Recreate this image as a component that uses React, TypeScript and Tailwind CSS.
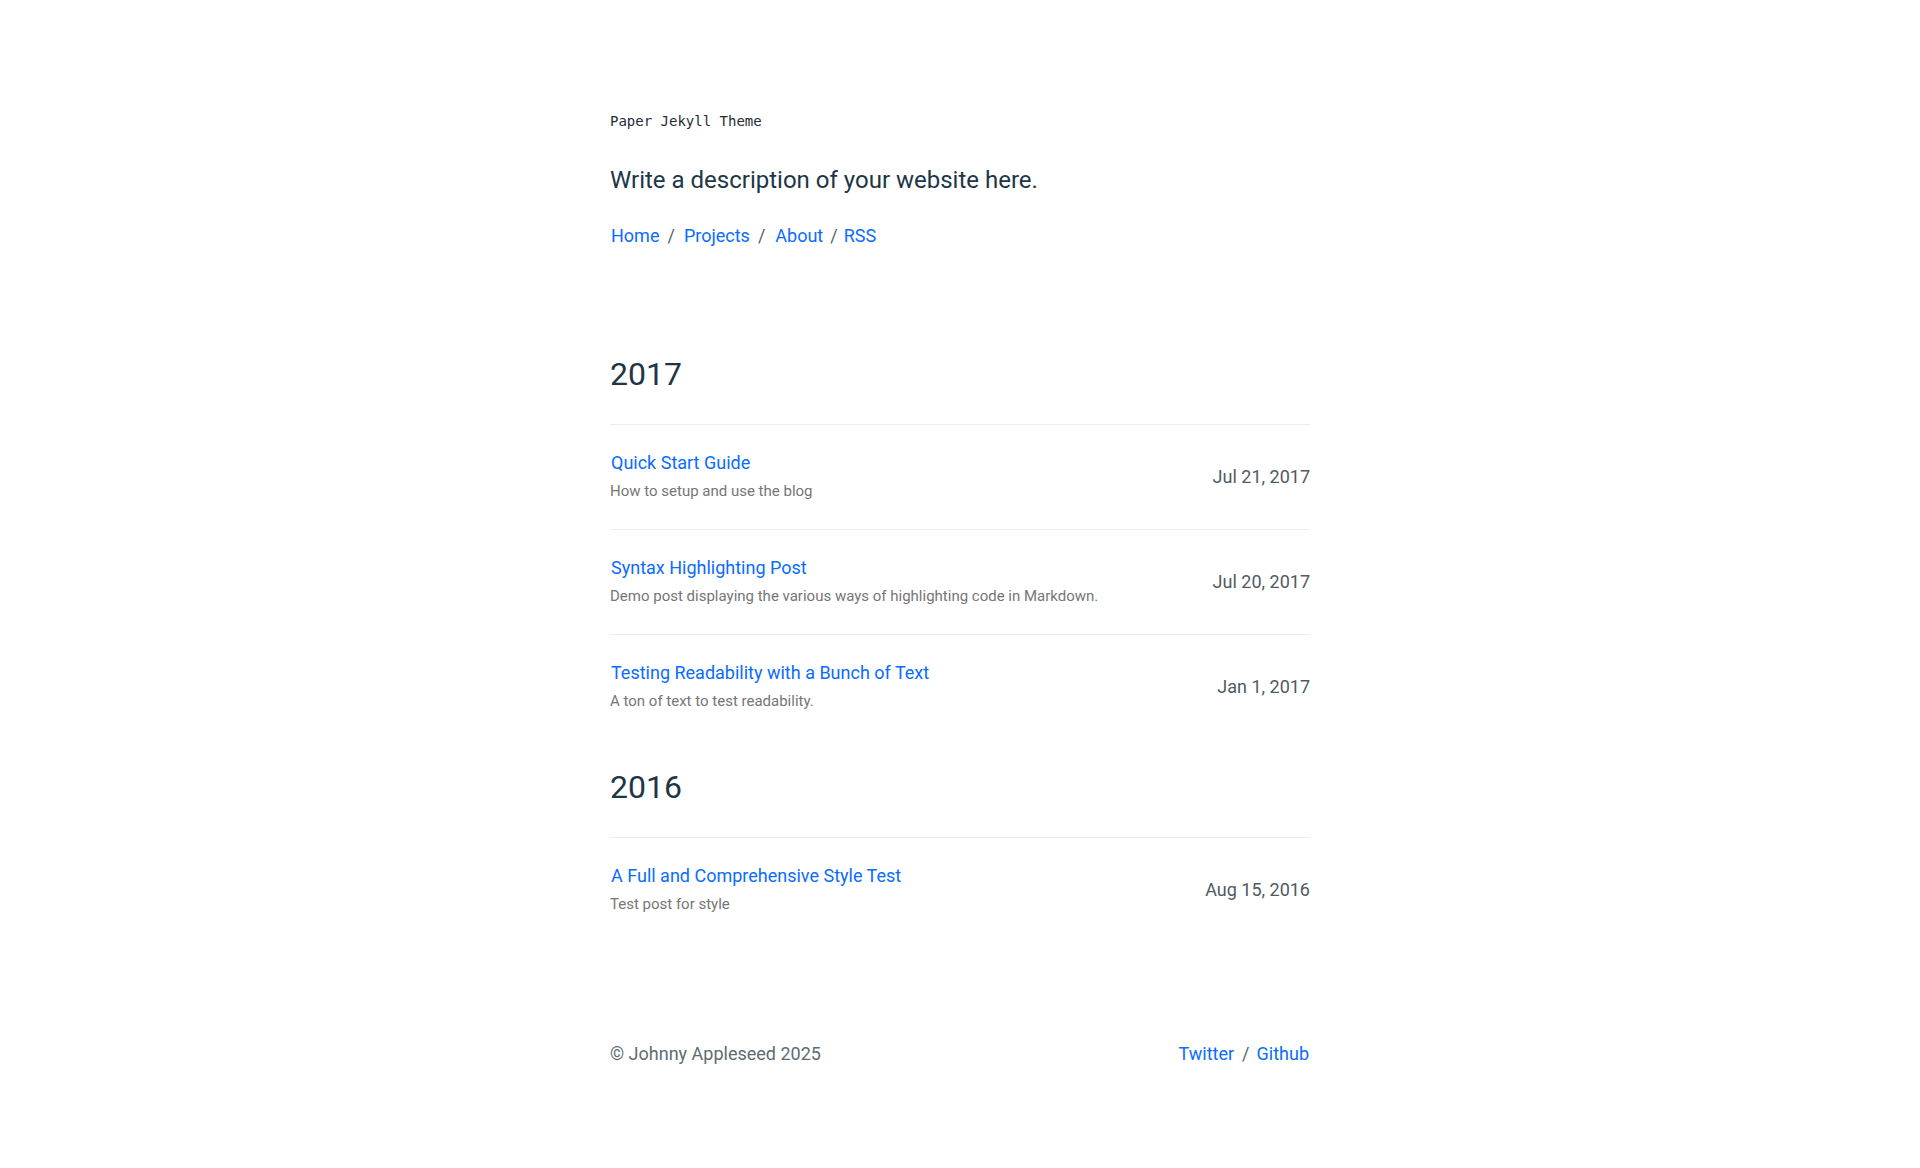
import React from 'react';

const posts = [
  {
    year: '2017',
    items: [
      { title: 'Quick Start Guide', desc: 'How to setup and use the blog', date: 'Jul 21, 2017' },
      { title: 'Syntax Highlighting Post', desc: 'Demo post displaying the various ways of highlighting code in Markdown.', date: 'Jul 20, 2017' },
      { title: 'Testing Readability with a Bunch of Text', desc: 'A ton of text to test readability.', date: 'Jan 1, 2017' },
    ],
  },
  {
    year: '2016',
    items: [
      { title: 'A Full and Comprehensive Style Test', desc: 'Test post for style', date: 'Aug 15, 2016' },
    ],
  },
];

function Sep() {
  return <span className="px-[8px] text-[#5a6268]">/</span>;
}

export default function App() {
  return (
    <div className="min-h-screen bg-white font-['Roboto',sans-serif] antialiased">
      <div className="w-[700px] mx-auto pt-[109px] pb-[100px]">
        <header>
          <div className="font-['DejaVu_Sans_Mono',monospace] text-[14px] leading-[24px] text-[#1f2d36]">Paper Jekyll Theme</div>
          <p className="mt-[31px] text-[24px] leading-[32px] text-[#1e3646]">Write a description of your website here.</p>
          <nav className="mt-[26px] text-[18px] leading-[28px] text-[#0a6cff]">
            <a href="#" className="pl-px">Home</a>
            <Sep />
            <a href="#" className="pl-px">Projects</a>
            <Sep />
            <a href="#" className="pl-[2px]">About</a>
            <span className="pl-[7px] pr-[6px] text-[#5a6268]">/</span>
            <a href="#">RSS</a>
          </nav>
        </header>

        <main className="mt-[104px]">
          {posts.map((group, gi) => (
            <section key={group.year} className={gi > 0 ? 'mt-[28px]' : ''}>
              <h2 className="text-[32px] leading-[40px] text-[#1e3646] mb-[30px]">{group.year}</h2>
              {group.items.map((p) => (
                <div key={p.title} className="border-t border-[#ececec] pt-[24px] pb-[28px] flex items-center justify-between">
                  <div>
                    <a href="#" className="block pl-px text-[18px] leading-[28px] text-[#0a6cff]">{p.title}</a>
                    <div className="mt-[4px] text-[15px] leading-[20px] text-[#767676]">{p.desc}</div>
                  </div>
                  <div className="text-[18px] leading-[28px] text-[#4f5a62] pt-[4px]">{p.date}</div>
                </div>
              ))}
            </section>
          ))}
        </main>

        <footer className="mt-[98px] flex justify-between text-[18px] leading-[28px]">
          <span className="text-[#5f6b73]">© Johnny Appleseed 2025</span>
          <span className="pr-px">
            <a href="#" className="text-[#0a6cff]">Twitter</a>
            <span className="pl-[8px] pr-[7px] text-[#5a6268]">/</span>
            <a href="#" className="text-[#0a6cff]">Github</a>
          </span>
        </footer>
      </div>
    </div>
  );
}
